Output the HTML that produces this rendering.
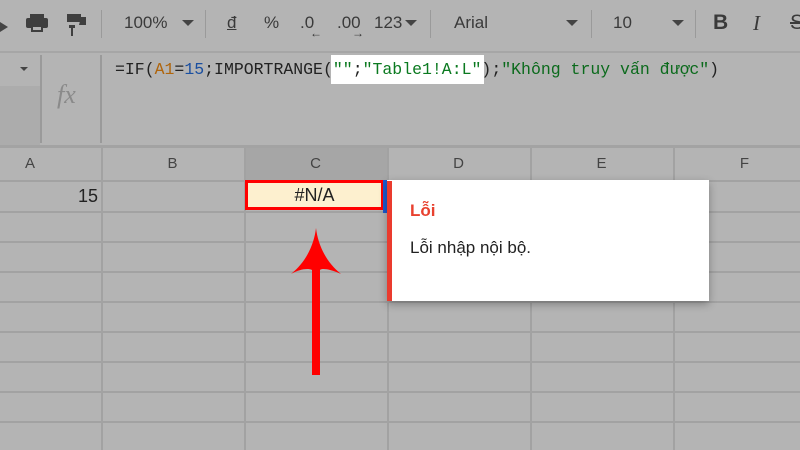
<!DOCTYPE html>
<html><head><meta charset="utf-8"><style>
body{margin:0;width:800px;height:450px;overflow:hidden;background:#b4b4b4;font-family:"Liberation Sans",sans-serif;position:relative}
.a{position:absolute}
.tb{color:#3a3a3a;font-size:17px}
.vl{position:absolute;background:#a2a2a2;width:1px}
.hl{position:absolute;background:#a2a2a2;height:1px;left:0;width:800px}
.mono{font-family:"Liberation Mono","DejaVu Sans Mono",monospace;font-size:16.5px;color:#222}
.hd{position:absolute;top:147px;height:33px;line-height:33px;text-align:center;color:#444;font-size:15px}
</style></head><body>
<div class="a" style="left:0;top:0;width:800px;height:51px;background:#b4b4b4"></div>
<svg class="a" style="left:0;top:10px" width="100" height="30"><path d="M0 12 L8 17 L0 22Z" fill="#444"/>
<rect x="26" y="8" width="22" height="10" rx="2" fill="#3f3f3f"/><rect x="30" y="4" width="14" height="5" fill="#3f3f3f"/><rect x="31" y="15" width="12" height="7" fill="#3f3f3f"/><rect x="33" y="17" width="8" height="3" fill="#b4b4b4"/>
<path d="M67 4h14v8h-14z M81 7h5v8h-11v3h-2v8h-2v-8h-2v-3h10z" fill="#3f3f3f"/></svg>
<div class="vl" style="left:101px;top:10px;height:28px;background:#9a9a9a"></div>
<div class="a tb" style="left:124px;top:13px">100%</div>
<svg class="a" style="left:182px;top:20px" width="12" height="8"><path d="M0 0h12L6 6z" fill="#444"/></svg>
<div class="vl" style="left:205px;top:10px;height:28px;background:#9a9a9a"></div>
<div class="a tb" style="left:227px;top:13px;text-decoration:underline">đ</div>
<div class="a tb" style="left:264px;top:13px">%</div>
<div class="a tb" style="left:300px;top:13px">.0</div>
<div class="a" style="left:310px;top:26px;font-size:12px;color:#333">←</div>
<div class="a tb" style="left:337px;top:13px">.00</div>
<div class="a" style="left:352px;top:26px;font-size:12px;color:#333">→</div>
<div class="a tb" style="left:374px;top:13px">123</div>
<svg class="a" style="left:405px;top:20px" width="12" height="8"><path d="M0 0h12L6 6z" fill="#444"/></svg>
<div class="vl" style="left:430px;top:10px;height:28px;background:#9a9a9a"></div>
<div class="a tb" style="left:454px;top:13px">Arial</div>
<svg class="a" style="left:566px;top:20px" width="12" height="8"><path d="M0 0h12L6 6z" fill="#444"/></svg>
<div class="vl" style="left:591px;top:10px;height:28px;background:#9a9a9a"></div>
<div class="a tb" style="left:613px;top:13px">10</div>
<svg class="a" style="left:672px;top:20px" width="12" height="8"><path d="M0 0h12L6 6z" fill="#444"/></svg>
<div class="vl" style="left:695px;top:10px;height:28px;background:#9a9a9a"></div>
<div class="a" style="left:713px;top:11px;font-size:21px;font-weight:bold;color:#3a3a3a">B</div>
<div class="a" style="left:753px;top:11px;font-size:21px;font-style:italic;color:#3a3a3a;font-family:'Liberation Serif',serif">I</div>
<div class="a" style="left:790px;top:11px;font-size:21px;color:#3a3a3a;text-decoration:line-through">S</div>
<div class="hl" style="top:51px;height:2px;background:#a6a6a6"></div>
<div class="a" style="left:0;top:86px;width:40px;height:60px;background:#acacac"></div>
<svg class="a" style="left:20px;top:67px" width="10" height="6"><path d="M0 0h8L4 4z" fill="#444"/></svg>
<div class="vl" style="left:40px;top:55px;height:88px;background:#9a9a9a;width:2px"></div>
<div class="vl" style="left:100px;top:55px;height:88px;background:#9a9a9a;width:2px"></div>
<div class="a" style="left:57px;top:80px;font-family:'Liberation Serif',serif;font-style:italic;font-size:26px;color:#8a8a8a">fx</div>
<div class="a" style="left:331px;top:55px;width:153px;height:29px;background:#fff"></div>
<div class="a mono" style="left:115px;top:60px;white-space:pre">=IF(<span style="color:#b0650c">A1</span>=<span style="color:#1a4fa0">15</span>;IMPORTRANGE(<span style="color:#0b7a20">""</span>;<span style="color:#0b7a20">"Table1!A:L"</span>);<span style="color:#0b6a1c">"Không truy vấn được"</span>)</div>
<div class="hl" style="top:145px;height:3px;background:#a3a3a3"></div>
<div class="a" style="left:244px;top:148px;width:143px;height:32px;background:#a6a6a6"></div>
<div class="hd" style="left:0;width:60px">A</div>
<div class="hd" style="left:101px;width:143px">B</div>
<div class="hd" style="left:244px;width:143px">C</div>
<div class="hd" style="left:387px;width:143px">D</div>
<div class="hd" style="left:530px;width:143px">E</div>
<div class="hd" style="left:673px;width:143px">F</div>
<div class="vl" style="left:101px;top:148px;height:302px;width:2px"></div>
<div class="vl" style="left:244px;top:148px;height:302px;width:2px"></div>
<div class="vl" style="left:387px;top:148px;height:302px;width:2px"></div>
<div class="vl" style="left:530px;top:148px;height:302px;width:2px"></div>
<div class="vl" style="left:673px;top:148px;height:302px;width:2px"></div>
<div class="hl" style="top:180px;height:2px"></div>
<div class="hl" style="top:211px;height:2px"></div>
<div class="hl" style="top:241px;height:2px"></div>
<div class="hl" style="top:271px;height:2px"></div>
<div class="hl" style="top:301px;height:2px"></div>
<div class="hl" style="top:331px;height:2px"></div>
<div class="hl" style="top:361px;height:2px"></div>
<div class="hl" style="top:391px;height:2px"></div>
<div class="hl" style="top:421px;height:2px"></div>
<div class="a" style="left:50px;top:186px;width:48px;text-align:right;font-size:18px;color:#222">15</div>
<div class="a" style="left:245px;top:180px;width:133px;height:24px;background:#fdf0cf;border:3px solid #f00;text-align:center;line-height:24px;font-size:18px;color:#222">#N/A</div>
<div class="a" style="left:383px;top:180px;width:4px;height:33px;background:#1a5bd0"></div>
<div class="a" style="left:387px;top:180px;width:322px;height:121px;background:#fff;box-shadow:0 3px 8px rgba(0,0,0,.3)"></div>
<div class="a" style="left:387px;top:181px;width:5px;height:120px;background:#ea3b2e"></div>
<div class="a" style="left:410px;top:201px;font-size:17px;font-weight:bold;color:#e8412f">Lỗi</div>
<div class="a" style="left:410px;top:238px;font-size:17px;color:#222">Lỗi nhập nội bộ.</div>
<svg class="a" style="left:280px;top:220px" width="70" height="160"><path d="M36 8 C 38 25 46 42 61 54 C 50 49 42 48 40 50 L40 155 L32 155 L32 50 C 28 48 20 49 11 54 C 26 42 34 25 36 8Z" fill="#f00"/></svg>
</body></html>
